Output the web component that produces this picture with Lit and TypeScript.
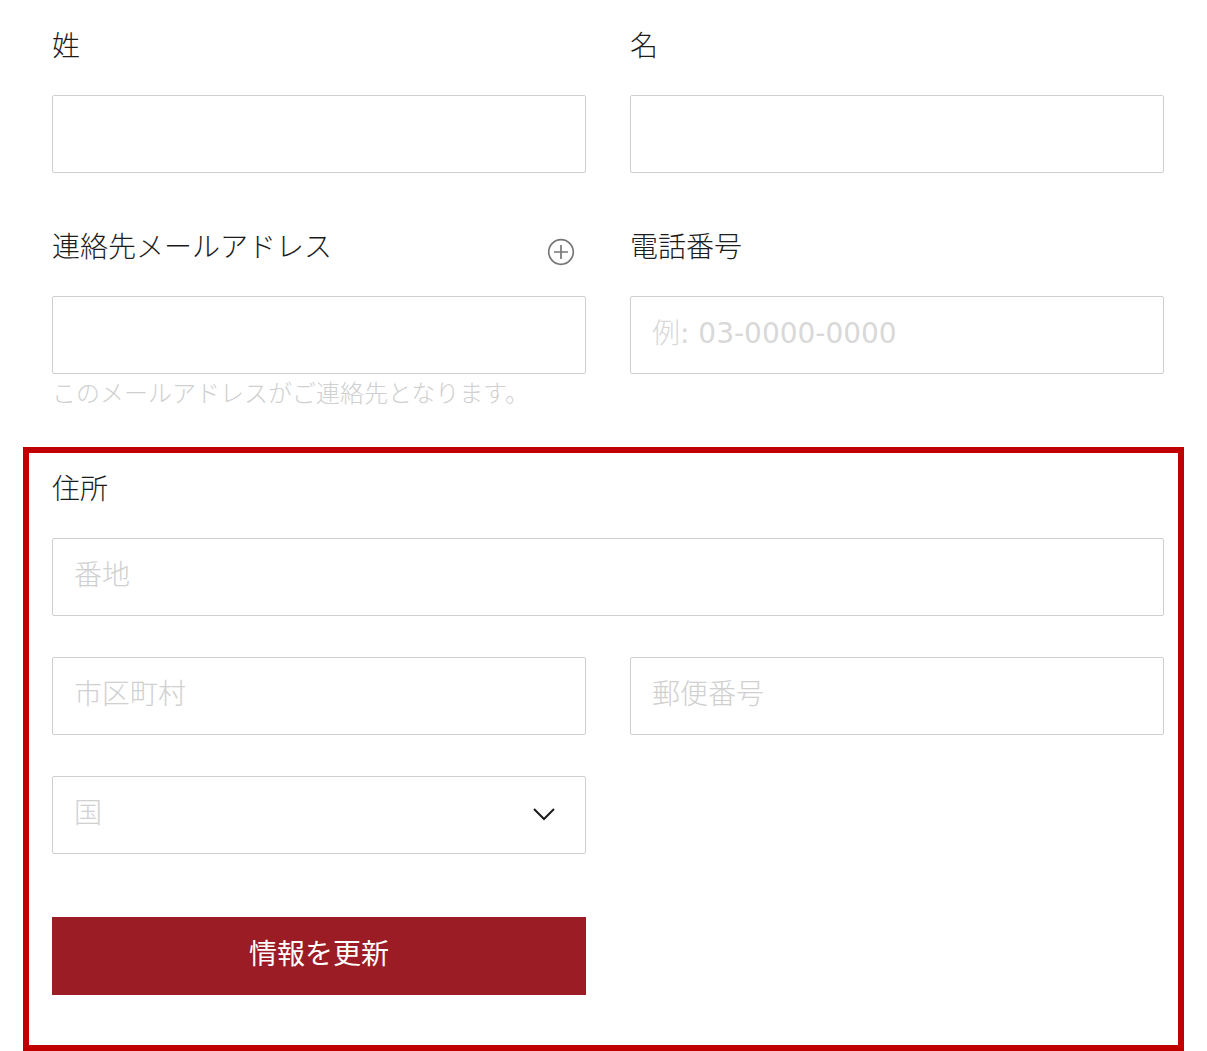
import { LitElement, html, css } from "lit";
import { customElement } from "lit/decorators.js";

@customElement("app-root")
export class AppRoot extends LitElement {
  static styles = css`
    :host {
      display: block;
      background: #fff;
      color: #1c1c1c;
      font-family: "Noto Sans CJK JP", sans-serif;
      font-size: 28px;
      font-weight: 300;
    }
    *, *::before, *::after { box-sizing: border-box; }
    .form { padding-top: 25px; }
    .grid {
      display: grid;
      grid-template-columns: 1fr 1fr;
      column-gap: 44px;
      align-items: start;
    }
    .contact { row-gap: 53px; padding: 0 43px 0 52px; }
    .address {
      row-gap: 41px;
      margin: 37px 23px 0;
      padding: 15px 14px 50px 23px;
      border: 6px solid #c00000;
    }
    .field { display: flex; flex-direction: column; min-width: 0; }
    .wide { grid-column: 1 / -1; }
    .label-row {
      display: flex;
      justify-content: space-between;
      height: 42px;
      margin-bottom: 28px;
      padding-right: 9px;
    }
    .label { line-height: 38px; }
    .box {
      display: block;
      width: 100%;
      height: 78px;
      margin: 0;
      padding: 0 21px 8px;
      border: 1px solid #cfcfcf;
      border-radius: 2px;
      background: #fff;
      color: #262626;
      font: inherit;
      outline-color: #9b1c24;
    }
    .box::placeholder { color: #d0d0d0; opacity: 1; }
    .phone {
      padding-bottom: 4px;
      font-family: "DejaVu Sans", "Noto Sans CJK JP Light", "Noto Sans CJK JP", sans-serif;
      font-weight: 400;
    }
    .phone::placeholder { color: #d8d8d8; }
    .hint {
      margin: 0;
      color: #d0d0d0;
      font-size: 24px;
      line-height: 36px;
    }
    .icon-button {
      display: grid;
      place-items: center;
      align-self: flex-end;
      width: 32px;
      height: 32px;
      padding: 0;
      border: 0;
      background: none;
      color: #777;
      cursor: pointer;
    }
    .icon-button svg, .chevron { display: block; fill: none; stroke: currentColor; }
    .select-wrap { display: grid; align-items: center; }
    .select-wrap > * { grid-area: 1 / 1; }
    .select { appearance: none; color: #d0d0d0; cursor: pointer; }
    .chevron { justify-self: end; margin: 0 29px 2px 0; pointer-events: none; }
    .submit {
      grid-column: 1;
      height: 78px;
      margin: 22px 0 0;
      padding: 0 21px 8px;
      border: 0;
      background: #9b1c24;
      color: #fff;
      font: inherit;
      font-weight: 400;
      cursor: pointer;
    }
  `;

  private field(id: string, label: string, type = "text") {
    return html`
      <div class="field">
        <div class="label-row"><label class="label" for=${id}>${label}</label></div>
        <input class="box" id=${id} type=${type} />
      </div>
    `;
  }

  render() {
    return html`
      <form class="form" @submit=${(e: Event) => e.preventDefault()}>
        <div class="grid contact">
          ${this.field("last-name", "姓")}
          ${this.field("first-name", "名")}
          <div class="field">
            <div class="label-row">
              <label class="label" for="email">連絡先メールアドレス</label>
              <button class="icon-button" type="button" aria-label="メールアドレスを追加">
                <svg width="28" height="28" viewBox="0 0 28 28" stroke-width="1.7">
                  <circle cx="14" cy="14" r="12.3" />
                  <path d="M14 7v14M7 14h14" />
                </svg>
              </button>
            </div>
            <input class="box" id="email" type="email" aria-describedby="email-hint" />
            <p class="hint" id="email-hint">このメールアドレスがご連絡先となります。</p>
          </div>
          <div class="field">
            <div class="label-row"><label class="label" for="phone">電話番号</label></div>
            <input class="box phone" id="phone" type="tel" placeholder="例: 03-0000-0000" />
          </div>
        </div>

        <div class="grid address">
          <div class="field wide">
            <div class="label-row"><label class="label" for="street">住所</label></div>
            <input class="box" id="street" type="text" placeholder="番地" />
          </div>
          <input class="box" type="text" placeholder="市区町村" aria-label="市区町村" />
          <input class="box" type="text" placeholder="郵便番号" aria-label="郵便番号" />
          <div class="select-wrap">
            <select class="box select" aria-label="国">
              <option>国</option>
            </select>
            <svg class="chevron" width="26" height="16" viewBox="0 0 26 16" stroke-width="2">
              <path d="M3 3l10 10L23 3" />
            </svg>
          </div>
          <button class="submit" type="submit">情報を更新</button>
        </div>
      </form>
    `;
  }
}
